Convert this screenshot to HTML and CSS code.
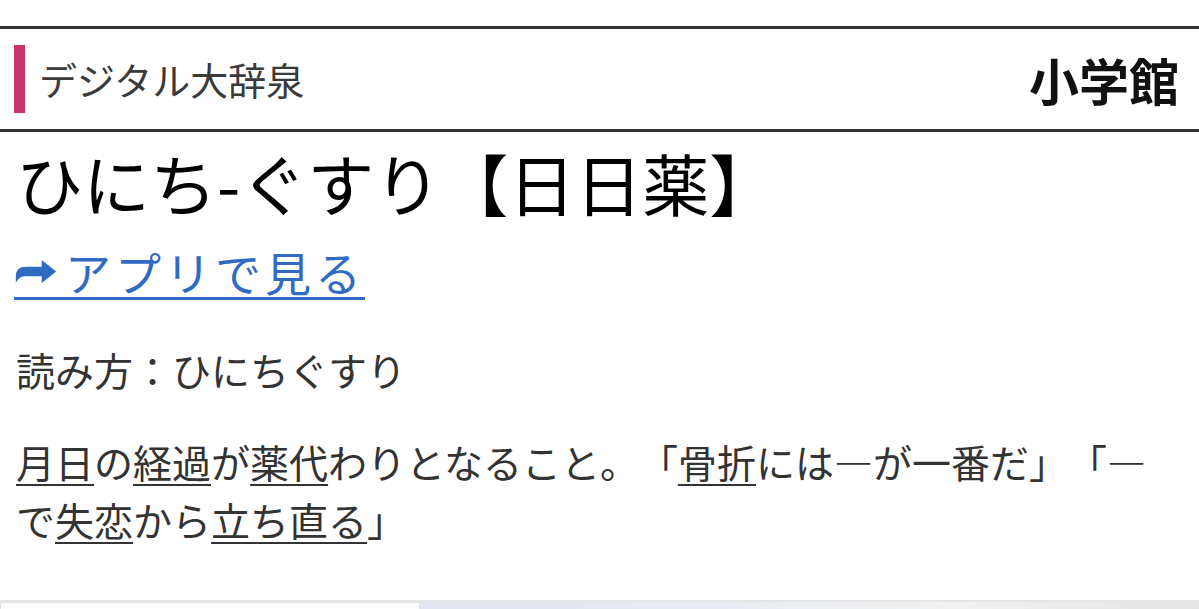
FILE: index.html
```html
<!DOCTYPE html>
<html lang="ja">
<head>
<meta charset="utf-8">
<title>ひにち-ぐすり【日日薬】 - デジタル大辞泉</title>
<link rel="stylesheet" href="styles.css">
</head>
<body>
<div class="page">
  <header class="brand">
    <div class="brand-name"><span class="bar"></span><span class="dict">デジタル大辞泉</span></div>
    <div class="publisher">小学館</div>
  </header>
  <main class="entry">
    <h1 class="title">ひにち-ぐすり【日日薬】</h1>
    <p class="app"><a class="applink" href="#"><svg class="arrow" viewBox="0 0 42 24" aria-hidden="true"><path d="M0 17 C0 10 4 7 11 7 L27 7 L27 0 L42 12 L27 24 L27 17 L11 17 C6 17 2 19 0 24 Z"/></svg><span>アプリで見る</span></a></p>
    <p class="reading">読み方：ひにちぐすり</p>
    <p class="def"><a class="term" href="#">月日</a>の<a class="term" href="#">経過</a>が<a class="term" href="#">薬代</a>わりとなること。「<a class="term" href="#">骨折</a>には<span class="dash">—</span>が一番だ」「<span class="dash">—</span>で<a class="term" href="#">失恋</a>から<a class="term" href="#">立ち直る</a>」</p>
  </main>
  <div class="strip">
    <div class="cell cell-left"></div>
    <div class="cell cell-right"></div>
  </div>
</div>
</body>
</html>
```
FILE: styles.css
```css
html, body {
  margin: 0;
  padding: 0;
  background: #fff;
}
body {
  font-family: "Noto Sans CJK JP", "Noto Sans", sans-serif;
  color: #333;
  text-spacing-trim: space-all;
}
.page {
  padding-top: 26px;
  width: 1199px;
  height: 609px;
  overflow: hidden;
  box-sizing: border-box;
}
.brand {
  border-top: 3px solid #333;
  border-bottom: 3px solid #333;
  height: 100px;
  display: flex;
  align-items: center;
  justify-content: space-between;
  padding: 0 20px 0 14px;
}
.brand-name {
  display: flex;
  align-items: center;
  gap: 14px;
  font-size: 38px;
  color: #3a3a3a;
  line-height: 1;
}
.bar {
  width: 11px;
  height: 68px;
  background: #c8336e;
}
.publisher {
  font-size: 50px;
  font-weight: 700;
  color: #111;
  line-height: 1;
}
.entry {
  padding: 0 24px 0 16px;
}
.title {
  margin: 10px 0 0;
  font-size: 67px;
  font-weight: 400;
  line-height: 80px;
  color: #000;
}
.app {
  margin: 26px 0 0;
  line-height: 1;
}
.applink {
  display: inline-flex;
  align-items: center;
  gap: 8px;
  color: #2f6bc3;
  text-decoration: none;
  font-size: 46px;
  letter-spacing: 4px;
  border-bottom: 3px solid #2f6bc3;
  padding: 0 0 3px 0;
  margin-left: -2px;
}
.arrow {
  width: 42px;
  height: 23px;
  fill: #2f6bc3;
  margin-left: 1px;
}
.reading {
  margin: 44px 0 0;
  font-size: 39px;
  line-height: 1.3;
  color: #333;
}
.def {
  margin: 37px 0 0;
  font-size: 39px;
  line-height: 58px;
  color: #333;
}
.dash {
  font-variant-east-asian: full-width;
}
.term {
  color: #333;
  text-decoration: underline;
  text-decoration-thickness: 2px;
  text-underline-offset: 6px;
}
.strip {
  margin-top: 52px;
  border-top: 2px solid #e6e6e6;
  display: flex;
  height: 10px;
}
.cell-left {
  width: 420px;
  border: 1px solid #e2e2e2;
  box-sizing: border-box;
  background: #fff;
}
.cell-right {
  flex: 1;
  background: linear-gradient(90deg, #dfe4ee, #e9edf3 40%, #f1f1f1 70%, #e4e4e4);
}
```
